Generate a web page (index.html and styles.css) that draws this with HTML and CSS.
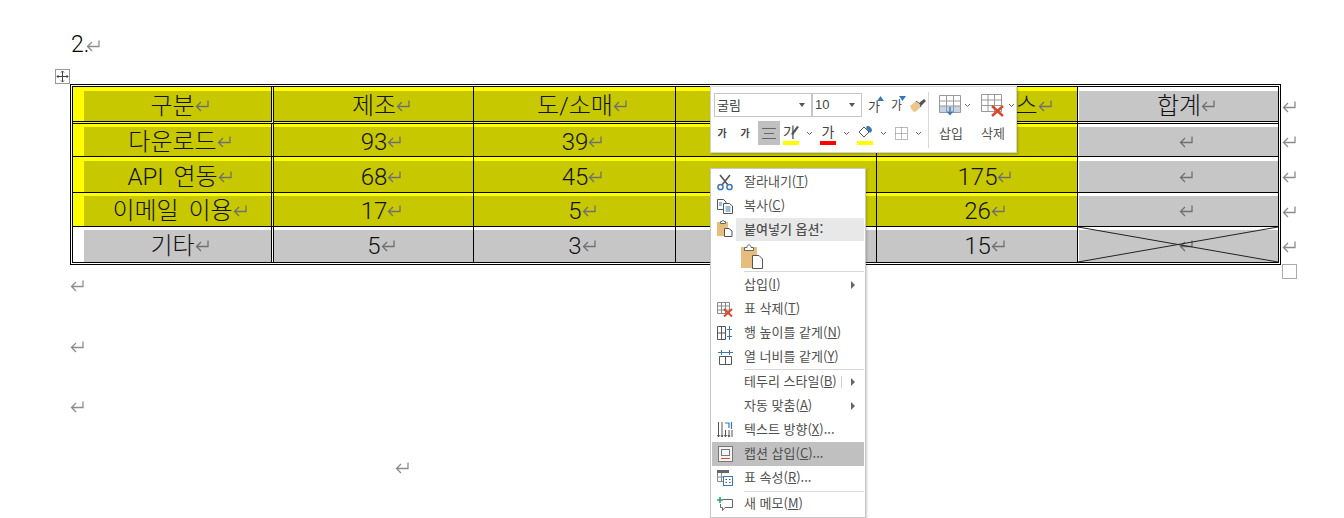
FILE: index.html
```html
<!DOCTYPE html>
<html lang="ko">

<head>
    <meta charset="UTF-8">
    <meta name="viewport" content="width=device-width, initial-scale=1.0">
    <title>문서</title>
    <link rel="stylesheet" href="styles.css">
</head>

<body>
    <svg class="defs" width="0" height="0">
        <symbol id="ret" viewBox="0 0 14 12">
            <path d="M13 .5V6.5H1.5M6 2L1.5 6.5L6 11" fill="none" stroke="currentColor" stroke-width="1.3"/>
        </symbol>
        <symbol id="chev" viewBox="0 0 7 5">
            <path d="M1 1L3.5 3.5L6 1" fill="none" stroke="#666" stroke-width="1"/>
        </symbol>
    </svg>

    <main class="doc">
        <p class="title">2.<svg class="ret ret-page"><use href="#ret"/></svg></p>

        <div class="table-wrap">
            <span class="move-handle">
                <svg width="13" height="13" viewBox="0 0 13 13"><path d="M6.5 1V12M1 6.5H12M5 2.5L6.5 1L8 2.5M5 10.5L6.5 12L8 10.5M2.5 5L1 6.5L2.5 8M10.5 5L12 6.5L10.5 8" fill="none" stroke="#444" stroke-width="1"/></svg>
            </span>
            <table class="grid">
                <colgroup>
                    <col class="c1"><col class="c2"><col class="c3"><col class="c4"><col class="c5"><col class="c6">
                </colgroup>
                <tr class="r1">
                    <td class="y first"><div class="s">구분<svg class="ret"><use href="#ret"/></svg></div></td>
                    <td class="y"><div class="s">제조<svg class="ret"><use href="#ret"/></svg></div></td>
                    <td class="y"><div class="s">도/소매<svg class="ret"><use href="#ret"/></svg></div></td>
                    <td class="y"><div class="s"></div></td>
                    <td class="y"><div class="s">공공 서비스<svg class="ret"><use href="#ret"/></svg></div></td>
                    <td class="g last"><div class="s">합계<svg class="ret"><use href="#ret"/></svg></div></td>
                </tr>
                <tr class="r2">
                    <td class="y first"><div class="s">다운로드<svg class="ret"><use href="#ret"/></svg></div></td>
                    <td class="y"><div class="s">93<svg class="ret"><use href="#ret"/></svg></div></td>
                    <td class="y"><div class="s">39<svg class="ret"><use href="#ret"/></svg></div></td>
                    <td class="y"><div class="s"></div></td>
                    <td class="y"><div class="s"></div></td>
                    <td class="g last"><div class="s"><svg class="ret"><use href="#ret"/></svg></div></td>
                </tr>
                <tr class="r3">
                    <td class="y first"><div class="s">API 연동<svg class="ret"><use href="#ret"/></svg></div></td>
                    <td class="y"><div class="s">68<svg class="ret"><use href="#ret"/></svg></div></td>
                    <td class="y"><div class="s">45<svg class="ret"><use href="#ret"/></svg></div></td>
                    <td class="y"><div class="s"></div></td>
                    <td class="y"><div class="s">175<svg class="ret"><use href="#ret"/></svg></div></td>
                    <td class="g last"><div class="s"><svg class="ret"><use href="#ret"/></svg></div></td>
                </tr>
                <tr class="r4">
                    <td class="y first"><div class="s">이메일 이용<svg class="ret"><use href="#ret"/></svg></div></td>
                    <td class="y"><div class="s">17<svg class="ret"><use href="#ret"/></svg></div></td>
                    <td class="y"><div class="s">5<svg class="ret"><use href="#ret"/></svg></div></td>
                    <td class="y"><div class="s"></div></td>
                    <td class="y"><div class="s">26<svg class="ret"><use href="#ret"/></svg></div></td>
                    <td class="g last"><div class="s"><svg class="ret"><use href="#ret"/></svg></div></td>
                </tr>
                <tr class="r5">
                    <td class="g first"><div class="s">기타<svg class="ret"><use href="#ret"/></svg></div></td>
                    <td class="g"><div class="s">5<svg class="ret"><use href="#ret"/></svg></div></td>
                    <td class="g"><div class="s">3<svg class="ret"><use href="#ret"/></svg></div></td>
                    <td class="g"><div class="s"></div></td>
                    <td class="g"><div class="s">15<svg class="ret"><use href="#ret"/></svg></div></td>
                    <td class="g last cross">
                        <div class="s"><svg class="ret"><use href="#ret"/></svg></div>
                        <svg class="cross-lines" viewBox="0 0 200 35" preserveAspectRatio="none">
                            <path d="M0 0L200 35M0 35L200 0" stroke="#222" stroke-width="1" fill="none"/>
                        </svg>
                    </td>
                </tr>
            </table>
            <div class="row-marks">
                <svg class="ret ret-page"><use href="#ret"/></svg>
                <svg class="ret ret-page"><use href="#ret"/></svg>
                <svg class="ret ret-page"><use href="#ret"/></svg>
                <svg class="ret ret-page"><use href="#ret"/></svg>
                <svg class="ret ret-page"><use href="#ret"/></svg>
                <span class="resize-handle"></span>
            </div>
        </div>

        <p class="para"><svg class="ret ret-page"><use href="#ret"/></svg></p>
        <p class="para"><svg class="ret ret-page"><use href="#ret"/></svg></p>
        <p class="para"><svg class="ret ret-page"><use href="#ret"/></svg></p>
        <p class="para para-indent"><svg class="ret ret-page"><use href="#ret"/></svg></p>
    </main>

    <!-- mini toolbar -->
    <div class="mini">
        <div class="mini-left">
            <div class="mini-row">
                <span class="combo combo-font">굴림<i class="caret"></i></span>
                <span class="combo combo-size">10<i class="caret"></i></span>
                <span class="tool tool-grow">가
                    <svg class="tip" width="7" height="5" viewBox="0 0 7 5"><path d="M0 5L3.5 0L7 5Z" fill="#3a78b5"/></svg>
                </span>
                <span class="tool tool-shrink">가
                    <svg class="tip" width="7" height="5" viewBox="0 0 7 5"><path d="M0 0L3.5 5L7 0Z" fill="#3a78b5"/></svg>
                </span>
                <svg class="brush" width="17" height="15" viewBox="0 0 17 15">
                    <path d="M1 8L7 3L12 9L6 14C4 14 2 11 1 8Z" fill="#eac58c"/>
                    <path d="M7 3L11 6L12 9" fill="none" stroke="#555" stroke-width="1"/>
                    <path d="M10 5L15 1L17 3L12 8Z" fill="#555"/>
                </svg>
            </div>
            <div class="mini-row mini-row-low">
                <span class="tool tool-b">가</span>
                <span class="tool tool-i">가</span>
                <span class="tool tool-align">
                    <svg width="14" height="11" viewBox="0 0 14 11"><path d="M0 .5H14M2 5.5H12M0 10.5H14" stroke="#666" stroke-width="1"/></svg>
                </span>
                <span class="tool tool-bar tool-mark">가
                    <svg class="pen" width="9" height="10" viewBox="0 0 9 10"><path d="M1 9L7 1L9 2L3 10Z" fill="#555"/></svg>
                    <i class="bar bar-yellow"></i>
                </span>
                <svg class="chev" width="7" height="5"><use href="#chev"/></svg>
                <span class="tool tool-bar">가<i class="bar bar-red"></i></span>
                <svg class="chev" width="7" height="5"><use href="#chev"/></svg>
                <span class="tool tool-bar">
                    <svg class="bucket" width="16" height="13" viewBox="0 0 16 13"><path d="M2 7L7 2L12 7L7 12Z" fill="#fff" stroke="#555" stroke-width="1"/><path d="M10 1C13 1 15 3 15 6L13 8L9 3Z" fill="#3a78b5"/></svg>
                    <i class="bar bar-yellow"></i>
                </span>
                <svg class="chev" width="7" height="5"><use href="#chev"/></svg>
                <svg class="borders" width="13" height="13" viewBox="0 0 13 13"><path d="M.5 .5H12.5V12.5H.5ZM6.5 .5V12.5M.5 6.5H12.5" fill="none" stroke="#777" stroke-width="1" stroke-dasharray="1 1"/></svg>
                <svg class="chev chev-last" width="7" height="5"><use href="#chev"/></svg>
            </div>
        </div>
        <span class="mini-divider"></span>
        <div class="mini-right">
            <div class="big-tool">
                <span class="big-icon">
                    <svg width="22" height="21" viewBox="0 0 22 21">
                        <rect x="1" y="11" width="20" height="6" fill="#c5d5e5"/>
                        <path d="M.5 .5H21.5V17.5H.5ZM.5 6H21.5M.5 11H21.5M7.5 .5V17.5M14.5 .5V17.5" fill="none" stroke="#999" stroke-width="1"/>
                        <path d="M11 12V19M8.5 16.5L11 19.5L13.5 16.5" fill="none" stroke="#3a78b5" stroke-width="1.4"/>
                    </svg>
                    <svg class="chev" width="7" height="5"><use href="#chev"/></svg>
                </span>
                <span class="big-label">삽입</span>
            </div>
            <div class="big-tool">
                <span class="big-icon">
                    <svg width="24" height="23" viewBox="0 0 24 23">
                        <path d="M.5 .5H20.5V17.5H.5ZM.5 6H20.5M.5 11.5H20.5M7 .5V17.5M13.5 .5V17.5" fill="none" stroke="#999" stroke-width="1"/>
                        <path d="M11 12L22 22M22 12L11 22" stroke="#d9482b" stroke-width="2.4"/>
                    </svg>
                    <svg class="chev" width="7" height="5"><use href="#chev"/></svg>
                </span>
                <span class="big-label">삭제</span>
            </div>
        </div>
    </div>

    <!-- context menu -->
    <ul class="menu">
        <li class="item">
            <span class="ico">
                <svg width="16" height="17" viewBox="0 0 16 17"><path d="M3 1L11 11M13 1L5 11" stroke="#555" stroke-width="1.6"/><circle cx="3.5" cy="13" r="2.6" fill="none" stroke="#3a78b5" stroke-width="1.5"/><circle cx="12.5" cy="13" r="2.6" fill="none" stroke="#3a78b5" stroke-width="1.5"/></svg>
            </span>
            <span class="label">잘라내기(<u>T</u>)</span>
        </li>
        <li class="item">
            <span class="ico">
                <svg width="16" height="15" viewBox="0 0 16 15"><path d="M.5 .5H6.5L9 3V10.5H.5Z" fill="#fff" stroke="#555"/><path d="M6.5 4.5H12.5L15.5 7V14.5H6.5Z" fill="#fff" stroke="#555"/><path d="M8.5 8H13.5M8.5 10H13.5M8.5 12H13.5M2 4H5M2 6H5" stroke="#3a78b5"/></svg>
            </span>
            <span class="label">복사(<u>C</u>)</span>
        </li>
        <li class="item item-head">
            <span class="ico ico-head">
                <svg width="17" height="17" viewBox="0 0 17 17"><rect x="1" y="2" width="11" height="14" fill="#e6bd7c"/><path d="M4.5 3.5V1.5H6C6 0 8 0 8 1.5H9.5V3.5Z" fill="#fff" stroke="#666"/><path d="M8.5 8.5H13L16 11V16.5H8.5Z" fill="#fff" stroke="#555"/></svg>
            </span>
            <span class="label label-head">붙여넣기 옵션:</span>
        </li>
        <li class="item-paste">
            <svg width="22" height="25" viewBox="0 0 22 25"><rect x="0" y="3" width="16" height="21" fill="#e6bd7c"/><path d="M3.5 6.5V3.5H6C6 0 10 0 10 3.5H12.5V6.5Z" fill="#fff" stroke="#666"/><path d="M11.5 11.5H18L21.5 15V24.5H11.5Z" fill="#fff" stroke="#555"/></svg>
        </li>
        <li class="sep"></li>
        <li class="item">
            <span class="ico"></span>
            <span class="label">삽입(<u>I</u>)</span>
            <i class="arrow"></i>
        </li>
        <li class="item">
            <span class="ico">
                <svg width="16" height="15" viewBox="0 0 16 15"><path d="M.5 .5H12.5V11.5H.5ZM.5 4H12.5M.5 8H12.5M4.5 .5V11.5M8.5 .5V11.5" fill="none" stroke="#888"/><path d="M7 7L15 14.5M15 7L7 14.5" stroke="#d9482b" stroke-width="2"/></svg>
            </span>
            <span class="label">표 삭제(<u>T</u>)</span>
        </li>
        <li class="item">
            <span class="ico">
                <svg width="16" height="14" viewBox="0 0 16 14"><path d="M.5 .5H8.5V13.5H.5ZM.5 7H8.5M4.5 .5V13.5" fill="none" stroke="#555"/><path d="M12.5 0V14M10 3.5H15M10 10.5H15" stroke="#3a78b5"/></svg>
            </span>
            <span class="label">행 높이를 같게(<u>N</u>)</span>
        </li>
        <li class="item">
            <span class="ico">
                <svg width="15" height="15" viewBox="0 0 15 15"><path d="M1.5 6.5H13.5V14.5H1.5ZM7.5 6.5V14.5" fill="none" stroke="#555"/><path d="M0 2.5H15M3.5 0V5M11.5 0V5" stroke="#3a78b5"/></svg>
            </span>
            <span class="label">열 너비를 같게(<u>Y</u>)</span>
        </li>
        <li class="sep sep-thin"></li>
        <li class="item">
            <span class="ico"></span>
            <span class="label">테두리 스타일(<u>B</u>)</span>
            <i class="arrow-line"></i>
            <i class="arrow"></i>
        </li>
        <li class="item">
            <span class="ico"></span>
            <span class="label">자동 맞춤(<u>A</u>)</span>
            <i class="arrow"></i>
        </li>
        <li class="item">
            <span class="ico">
                <svg width="16" height="17" viewBox="0 0 16 17"><path d="M1.5 0V15M5 0V15M8.5 8V15M12 8V15M15 8V15" stroke="#555"/><path d="M.5 13L1.5 15L2.5 13M4 13L5 15L6 13M7.5 13L8.5 15L9.5 13M11 13L12 15L13 13" fill="none" stroke="#555"/><path d="M8 1H12V6M14.5 0V7" fill="none" stroke="#3a78b5" stroke-width="1.2"/></svg>
            </span>
            <span class="label">텍스트 방향(<u>X</u>)...</span>
        </li>
        <li class="item item-on">
            <span class="ico">
                <svg width="15" height="16" viewBox="0 0 15 16"><rect x=".5" y=".5" width="14" height="15" fill="#f4f4f4" stroke="#777"/><rect x="3.5" y="3.5" width="8" height="6" fill="none" stroke="#777"/><path d="M3 12.5H12" stroke="#d9482b"/></svg>
            </span>
            <span class="label">캡션 삽입(<u>C</u>)...</span>
        </li>
        <li class="item">
            <span class="ico">
                <svg width="16" height="16" viewBox="0 0 16 16"><rect x="0" y="0" width="12" height="3" fill="#666"/><path d="M.5 3V11.5H6M4.5 3V11M.5 7H6" fill="none" stroke="#888"/><rect x="6.5" y="6.5" width="9" height="9" fill="#fff" stroke="#3a78b5"/><path d="M8.5 9.5H10M12 9.5H13.5M8.5 12.5H10M12 12.5H13.5" stroke="#555"/></svg>
            </span>
            <span class="label">표 속성(<u>R</u>)...</span>
        </li>
        <li class="sep sep-last"></li>
        <li class="item">
            <span class="ico">
                <svg width="16" height="15" viewBox="0 0 16 15"><path d="M6 2.5H15.5V10.5H8L5.5 13.5V10.5H3.5V7" fill="none" stroke="#666"/><path d="M3 0V6M0 3H6" stroke="#2e9e7c" stroke-width="1.6"/></svg>
            </span>
            <span class="label">새 메모(<u>M</u>)</span>
        </li>
    </ul>
</body>

</html>
```

FILE: styles.css
```css
body {
    margin: 0;
    height: 518px;
    overflow: hidden;
    background: #fff;
    color: #111;
    font-family: "Roboto", "Noto Sans CJK KR", sans-serif;
}

.defs {
    position: absolute;
}

.doc {
    padding: 32px 0 0 70px;
}

.ret {
    width: 14px;
    height: 12px;
    flex: none;
    color: #707070;
}

.ret-page {
    color: #8c8c8c;
}

.title {
    display: flex;
    align-items: center;
    margin: 0 0 26px;
    padding-left: 1px;
    height: 26px;
    font-size: 23px;
    font-weight: 300;
    line-height: 26px;
    color: #000;
}

.title .ret {
    margin-top: 1px;
    margin-left: -3px;
}

/* table */
.table-wrap {
    position: relative;
    display: flex;
    align-items: flex-start;
}

.move-handle {
    position: absolute;
    left: -15px;
    top: -15px;
    width: 13px;
    height: 13px;
    border: 1px solid #999;
    background: #fff;
    display: flex;
}

.grid {
    flex: none;
    width: 1211px;
    table-layout: fixed;
    border-collapse: separate;
    border-spacing: 0;
    border: 3px double #000;
    font-size: 24px;
    font-weight: 300;
    word-spacing: 4px;
}

.c1 { width: 201px; }
.c2 { width: 200px; }
.c3 { width: 202px; }
.c4 { width: 201px; }
.c5 { width: 201px; }
.c6 { width: 200px; }

.grid td {
    padding: 3px 0 0;
    border-right: 1px solid #000;
    border-bottom: 1px solid #000;
    vertical-align: top;
}

.grid td.first {
    border-right: 3px double #000;
}

.grid td.last {
    border-right: 0;
    padding-left: 1px;
}

.grid .r5 td {
    border-bottom: 0;
}

.grid .r1 td {
    border-bottom: 3px double #000;
    padding-top: 4px;
}

.grid .r3 td {
    padding-top: 4px;
}

.y {
    background: #ffff00;
}

.g {
    background: #fff;
}

.s {
    display: flex;
    align-items: center;
    justify-content: center;
    padding-left: 15px;
    line-height: 1;
    white-space: pre;
}

.y .s {
    background: #c8c800;
}

.g .s {
    background: #c6c6c6;
}

.first .s {
    margin-left: 11px;
    padding-left: 4px;
}

.r1 .s { height: 30px; }
.r2 .s { height: 29px; }
.r3 .s { height: 31px; }
.r4 .s { height: 30px; }
.r5 .s { height: 32px; }

.cross {
    position: relative;
}

.cross-lines {
    position: absolute;
    left: 0;
    top: 0;
    width: 100%;
    height: 100%;
}

.row-marks {
    display: flex;
    flex-direction: column;
    gap: 23px;
    box-sizing: border-box;
    height: 181px;
    padding: 17px 0 0 1px;
}

.resize-handle {
    flex: none;
    width: 13px;
    height: 13px;
    border: 1px solid #aaa;
    margin-top: -12px;
}

.para {
    margin: 0;
    height: 60.5px;
    padding-top: 15px;
    box-sizing: border-box;
    display: flex;
}

.para-indent {
    padding-left: 325px;
}

/* mini toolbar */
.mini {
    position: absolute;
    left: 710px;
    top: 86px;
    width: 307px;
    height: 67px;
    box-sizing: border-box;
    display: flex;
    background: #fff;
    border: 1px solid #d4d4d4;
    box-shadow: 1px 1px 2px rgba(0, 0, 0, 0.25);
    color: #444;
    font-family: "Noto Sans CJK KR", sans-serif;
}

.mini-left {
    flex: none;
    box-sizing: border-box;
    width: 217px;
    padding: 6px 0 0 3px;
}

.mini-row {
    display: flex;
    align-items: center;
    height: 24px;
}

.mini-row > * {
    flex: none;
}

.mini-row-low {
    margin-top: 4px;
}

.combo {
    position: relative;
    display: block;
    box-sizing: border-box;
    height: 24px;
    border: 1px solid #c6c6c6;
    font-size: 13px;
    line-height: 21px;
    padding-left: 2px;
}

.combo-font {
    width: 98px;
}

.combo-size {
    width: 50px;
    font-family: "Liberation Sans", sans-serif;
}

.caret {
    position: absolute;
    right: 6px;
    top: 9px;
    border: 3px solid transparent;
    border-top: 4px solid #555;
    border-bottom: 0;
}

.tool {
    position: relative;
    display: flex;
    align-items: center;
    justify-content: center;
    font-size: 12px;
    line-height: 1;
}

.tool-grow {
    width: 16px;
    margin-left: 6px;
    font-size: 13px;
    justify-content: flex-start;
}

.tool-shrink {
    width: 16px;
    margin-left: 7px;
    justify-content: flex-start;
}

.tip {
    margin: -13px 0 0 -3px;
}

.brush {
    margin-left: 2px;
}

.tool-b {
    width: 16px;
    font-size: 10px;
    font-weight: 700;
}

.tool-i {
    width: 16px;
    font-size: 10px;
    font-weight: 700;
    margin-left: 7px;
}

.tool-align {
    width: 22px;
    height: 24px;
    margin-left: 5px;
    background: #c0c0c0;
}

.tool-bar {
    width: 16px;
    height: 24px;
    font-size: 14px;
    padding-bottom: 4px;
    box-sizing: border-box;
}

.tool-align + .tool-bar {
    margin-left: 3px;
}

.tool-mark {
    justify-content: flex-start;
}

.pen {
    margin-left: -6px;
    margin-top: -3px;
}

.bar {
    position: absolute;
    left: 0;
    bottom: 0;
    width: 16px;
    height: 4px;
}

.bar-yellow {
    background: #ffff00;
}

.bar-red {
    background: #ff0000;
}

.chev {
    flex: none;
    margin-left: 7px;
    margin-right: 7px;
}

.borders {
    margin-left: 1px;
}

.chev-last {
    margin-right: 0;
}

.mini-divider {
    flex: none;
    width: 1px;
    height: 56px;
    margin-top: 5px;
    background: #d8d8d8;
}

.mini-right {
    display: flex;
    padding: 6px 0 0 10px;
    gap: 10px;
}

.big-tool {
    width: 32px;
    display: flex;
    flex-direction: column;
}

.big-icon {
    display: flex;
    align-items: center;
    height: 24px;
}

.big-icon svg {
    flex: none;
}

.big-icon .chev {
    margin: 0 0 0 3px;
}

.big-label {
    margin-top: 7px;
    font-size: 13px;
    line-height: 18px;
    color: #555;
}

/* context menu */
.menu {
    position: absolute;
    left: 710px;
    top: 168px;
    width: 156px;
    height: 350px;
    box-sizing: border-box;
    margin: 0;
    padding: 1px;
    list-style: none;
    background: #fff;
    border: 1px solid #c8c8c8;
    box-shadow: 1px 1px 2px rgba(0, 0, 0, 0.2);
    color: #505050;
    font-family: "Noto Sans CJK KR", sans-serif;
    font-size: 13px;
}

.item {
    position: relative;
    display: flex;
    align-items: center;
    height: 24px;
}

.ico {
    width: 26px;
    flex: none;
    display: flex;
    justify-content: center;
    align-items: center;
}

.label {
    padding-left: 6px;
    margin-top: -3px;
    white-space: nowrap;
}

.item-head {
    height: 23px;
}

.ico-head {
    width: 24px;
    align-self: flex-start;
    padding-top: 2px;
}

.label-head {
    flex: 1;
    height: 23px;
    margin-top: 0;
    padding-left: 8px;
    line-height: 21px;
    background: #e8e8e8;
    font-weight: 500;
}

.item-paste {
    height: 29px;
    padding: 3px 0 0 29px;
    box-sizing: border-box;
}

.sep {
    height: 1px;
    margin: 1px 0 1px 32px;
    background: #d8d8d8;
}

.sep-thin {
    margin: 0 0 0 32px;
}

.sep-last {
    margin: 1px 0 0 32px;
}

.item-on {
    background: #c0c0c0;
}

.arrow {
    position: absolute;
    right: 9px;
    top: 8px;
    border: 4px solid transparent;
    border-left: 4px solid #666;
    border-right: 0;
}

.arrow-line {
    position: absolute;
    right: 22px;
    top: 6px;
    width: 1px;
    height: 12px;
    background: #d0d0d0;
}
```
